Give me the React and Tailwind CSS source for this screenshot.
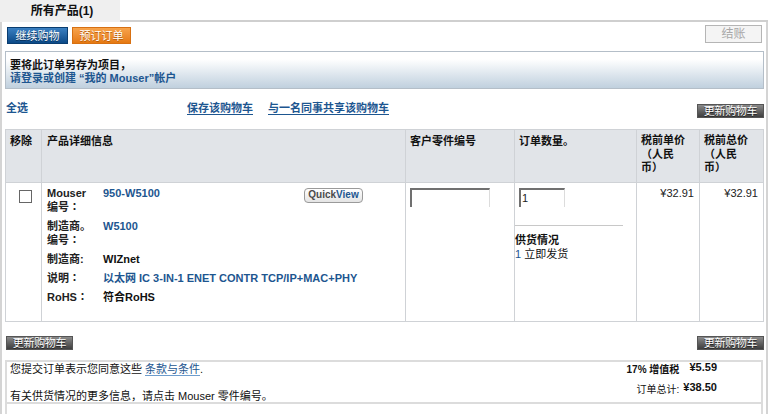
import React from "react";

const font = { fontFamily: '"Liberation Sans", Arial, "Noto Sans CJK SC", sans-serif' };

// full-width colon drawn centred, as in the reference
function Colon() {
  return <span className="font-['Noto_Sans_CJK_JP',sans-serif] leading-none">：</span>;
}

function GrayButton({ children }) {
  return (
    <button className="h-[14px] w-[67px] bg-linear-to-b from-[#8a8a8a] to-[#3f3f3f] border border-[#555] text-white text-[11px] leading-[12px] tracking-tight [text-shadow:0_1px_0_#222]">
      {children}
    </button>
  );
}

function Detail({ label, children, valueClass = "text-[#1d5690]", extra }) {
  return (
    <div className="flex mb-[5px]">
      <div className="w-[56px] shrink-0 font-bold text-[#222]">{label}</div>
      <div className={"flex-1 font-bold " + valueClass}>{children}</div>
      {extra}
    </div>
  );
}

function App() {
  return (
    <div className="w-[777px] h-[414px] overflow-hidden bg-white text-[11px] leading-[14px] text-[#111]" style={font}>
      <div className="flex w-[768px]">
        <div className="w-[120px] h-[22px] bg-[#efefef] flex items-center justify-center pl-[4px] font-bold text-[12px] text-[#111]">
          所有产品(1)
        </div>
        <div className="flex-1 border-b-2 border-[#cfcfcf]"></div>
      </div>

      <div className="w-[768px] border-x-2 border-[#d4d4d4] pl-[3px] pr-[2px]">
        <div className="flex items-start justify-between pt-[3px]">
          <div className="flex gap-[4px] pl-[2px] mt-[2px]">
            <button className="h-[17px] w-[61px] bg-linear-to-b from-[#3a80c2] to-[#0b4a88] border border-[#0a3d70] text-white text-[11px] [text-shadow:0_1px_0_#06305a]">
              继续购物
            </button>
            <button className="h-[17px] w-[59px] bg-linear-to-b from-[#f7a34a] to-[#e5790f] border border-[#d77012] text-white text-[11px] [text-shadow:0_1px_0_#b55c0a]">
              预订订单
            </button>
          </div>
          <button className="h-[18px] w-[57px] mr-[2px] bg-[#f4f4f4] border border-[#b5b5b5] text-[#a8a8a8] text-[12px]">
            结账
          </button>
        </div>

        <div className="mt-[7px] h-[38px] border border-[#b4bec8] bg-linear-to-b from-white from-20% to-[#c0d0de] pl-[4px] pt-[7px] font-bold leading-[13px]">
          <div className="text-[#111]">要将此订单另存为项目，</div>
          <div className="text-[#1d5690]">请登录或创建 “我的 Mouser”帐户</div>
        </div>

        <div className="mt-[15px] h-[14px] flex items-start justify-between">
          <div className="flex items-center font-bold text-[#1d5690] -mt-[3px]">
            <span className="w-[182px] pl-[1px]">全选</span>
            <span className="underline underline-offset-2 mr-[15px]">保存该购物车</span>
            <span className="underline underline-offset-2">与一名同事共享该购物车</span>
          </div>
          <GrayButton>更新购物车</GrayButton>
        </div>

        <table className="mt-[11px] w-[758px] border-collapse table-fixed">
          <colgroup>
            <col className="w-[36px]" />
            <col className="w-[364px]" />
            <col className="w-[109px]" />
            <col className="w-[122px]" />
            <col className="w-[63px]" />
            <col className="w-[64px]" />
          </colgroup>
          <thead>
            <tr className="h-[53px] bg-[#e1e4e8] font-bold text-left align-top">
              <th className="border border-[#cfd2d6] px-[4px] pt-[4px]">移除</th>
              <th className="border border-[#cfd2d6] px-[5px] pt-[4px]">产品详细信息</th>
              <th className="border border-[#cfd2d6] px-[4px] pt-[4px]">客户零件编号</th>
              <th className="border border-[#cfd2d6] px-[4px] pt-[4px]">订单数量。</th>
              <th className="border border-[#cfd2d6] px-[4px] pt-[4px] leading-[13.5px]">
                税前单价<br />（人民<br />币）
              </th>
              <th className="border border-[#cfd2d6] px-[4px] pt-[4px] leading-[13.5px]">
                税前总价<br />（人民<br />币）
              </th>
            </tr>
          </thead>
          <tbody>
            <tr className="h-[139px] align-top">
              <td className="border border-[#cfd2d6]">
                <div className="mt-[7px] ml-[13px] w-[13px] h-[13px] border border-[#666] bg-white"></div>
              </td>
              <td className="border border-[#cfd2d6] px-[5px] pt-[3px]">
                <Detail
                  label={<>Mouser<br />编号<Colon /></>}
                  extra={
                    <div className="pt-[1px] pr-[37px]">
                      <button className="h-[15px] w-[59px] rounded-[4px] border border-[#9a9a9a] bg-linear-to-b from-white to-[#e4e4e4] text-[10px] leading-[12px] font-bold">
                        <span className="text-[#4a4a4a]">Quick</span>
                        <span className="text-[#1d5690]">View</span>
                      </button>
                    </div>
                  }
                >
                  950-W5100
                </Detail>
                <Detail label={<>制造商。<br />编号<Colon /></>}>W5100</Detail>
                <Detail label="制造商:" valueClass="text-[#111]">WIZnet</Detail>
                <div className="mt-[1px]">
                  <Detail label={<>说明<Colon /></>}>以太网 IC 3-IN-1 ENET CONTR TCP/IP+MAC+PHY</Detail>
                </div>
                <Detail label={<>RoHS<Colon /></>} valueClass="text-[#111]">符合RoHS</Detail>
              </td>
              <td className="border border-[#cfd2d6] px-[4px] pt-[5px]">
                <div className="w-[80px] h-[19px] border-t-2 border-l-2 border-[#707070] border-r border-r-[#dcdcdc]"></div>
              </td>
              <td className="border border-[#cfd2d6] pt-[5px]">
                <div className="ml-[4px] w-[46px] h-[19px] border-t-2 border-l-2 border-[#707070] border-r border-r-[#dcdcdc] pl-[1px] leading-[16px] text-[11px] text-[#222]">
                  1
                </div>
                <div className="mt-[18px] w-[108px] border-t border-[#c8c8c8]"></div>
                <div className="mt-[7px] font-bold">供货情况</div>
                <div>
                  <span className="text-[#1d5690]">1</span> 立即发货
                </div>
              </td>
              <td className="border border-[#cfd2d6] pr-[5px] pt-[3px] text-right text-[#222]">¥32.91</td>
              <td className="border border-[#cfd2d6] pr-[5px] pt-[3px] text-right text-[#222]">¥32.91</td>
            </tr>
          </tbody>
        </table>

        <div className="mt-[14px] flex justify-between items-center pl-[1px]">
          <GrayButton>更新购物车</GrayButton>
          <GrayButton>更新购物车</GrayButton>
        </div>

        <div className="mt-[10px] w-[758px] h-[44px] border-t-2 border-x-2 border-b-2 border-[#dcdcdc] flex justify-between pl-[3px]">
          <div className="text-[#111]">
            <div>
              您提交订单表示您同意这些{" "}
              <span className="text-[#1d5690] border-b border-[#6d9ccc]">条款与条件</span>.
            </div>
            <div className="mt-[13px]">有关供货情况的更多信息，请点击 Mouser 零件编号。</div>
          </div>
          <div className="pr-[44px] pt-[1px] grid grid-cols-[auto_auto] gap-x-[4px] text-[10px] leading-[13px]">
            <div className="text-right font-bold">17% 增值税</div>
            <div className="text-right font-bold text-[11px] -mt-[2px]">¥5.59</div>
            <div className="text-right">订单总计:</div>
            <div className="text-right font-bold text-[11px] -mt-[2px]">¥38.50</div>
          </div>
        </div>
        <div className="w-[758px] h-[20px] border-x-2 border-[#dcdcdc]"></div>
      </div>
    </div>
  );
}

export default App;
